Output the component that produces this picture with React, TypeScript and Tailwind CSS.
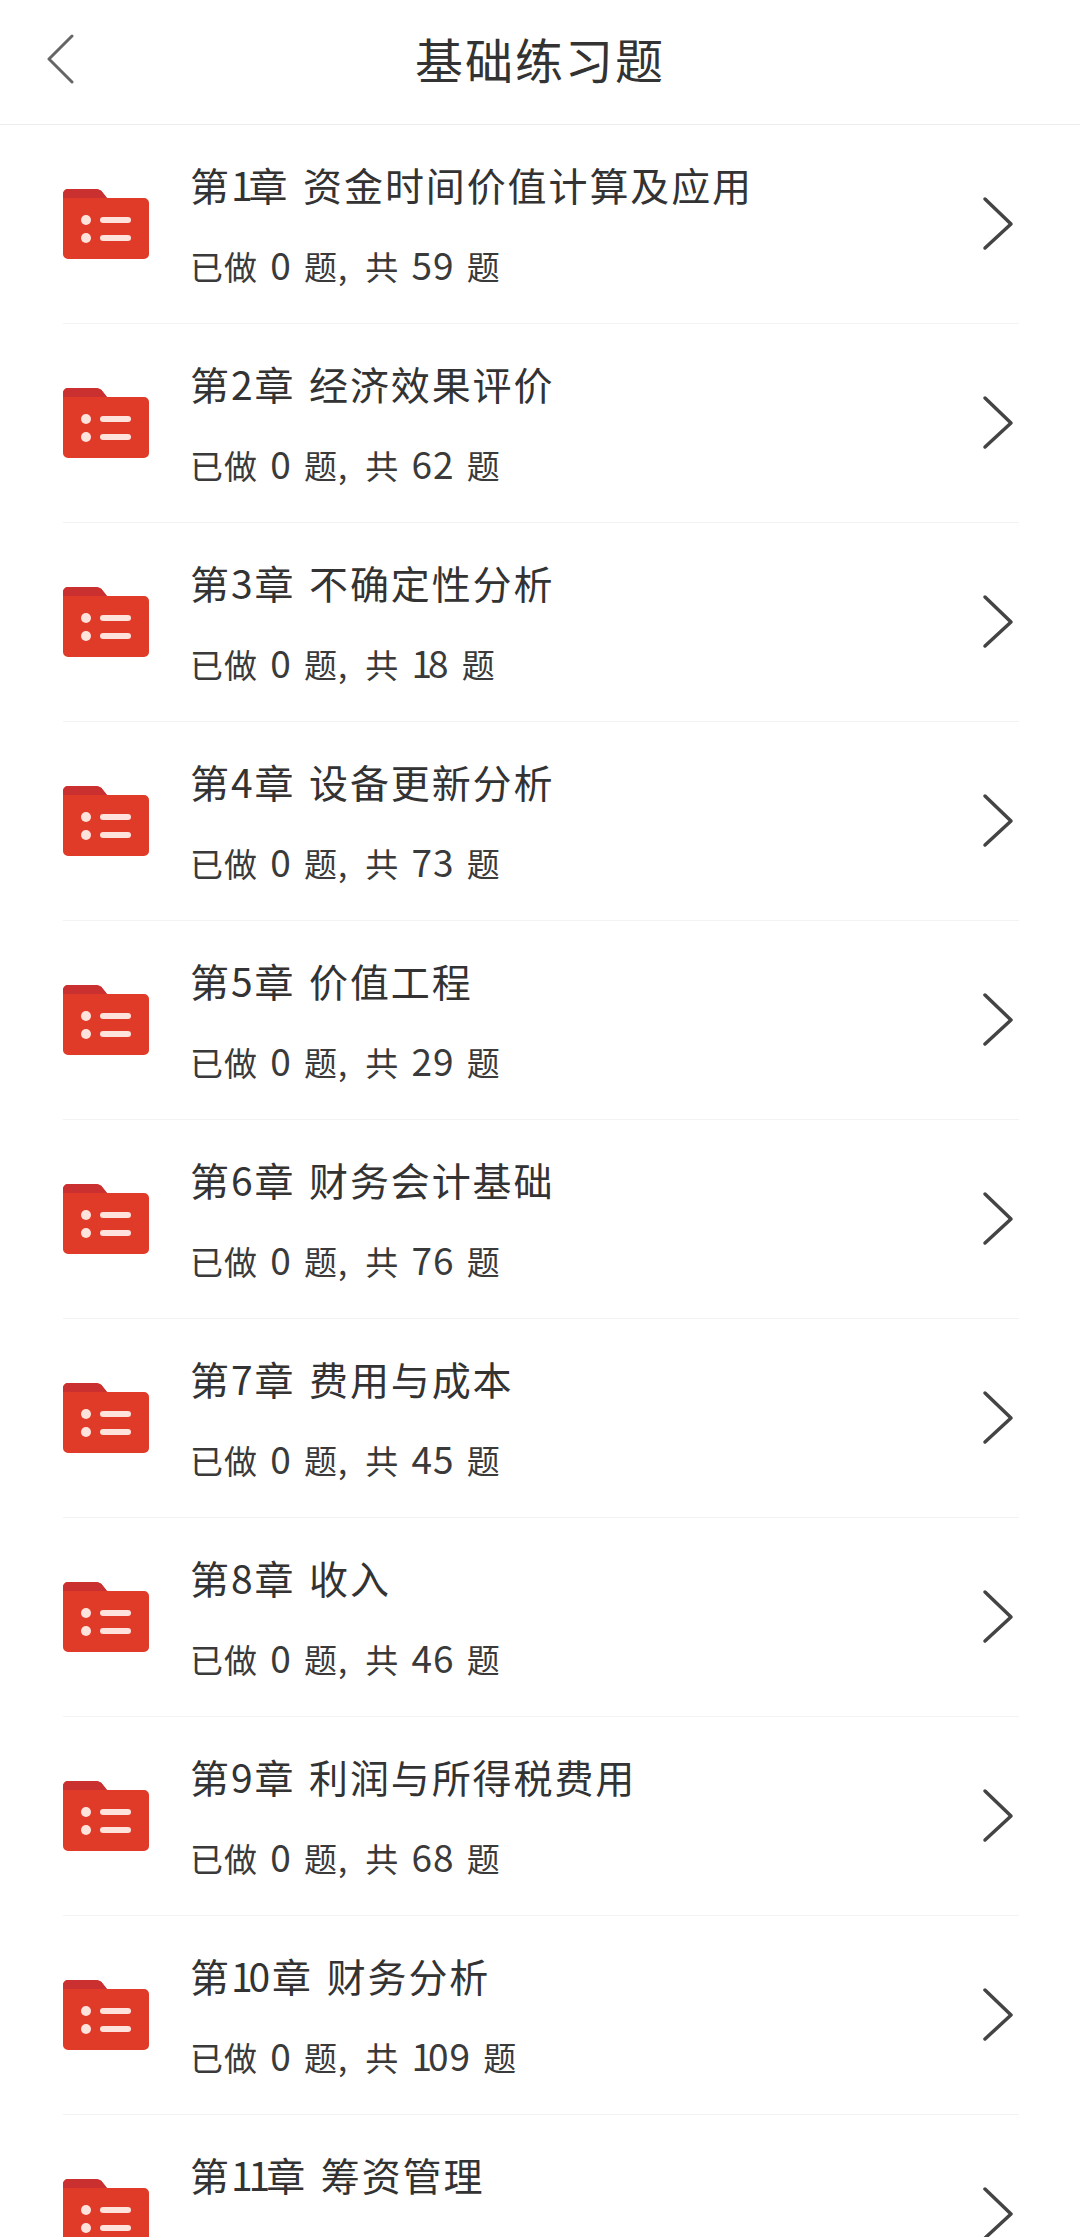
const chapters = [
  { no: "1", name: "资金时间价值计算及应用", total: 59 },
  { no: "2", name: "经济效果评价", total: 62 },
  { no: "3", name: "不确定性分析", total: 18 },
  { no: "4", name: "设备更新分析", total: 73 },
  { no: "5", name: "价值工程", total: 29 },
  { no: "6", name: "财务会计基础", total: 76 },
  { no: "7", name: "费用与成本", total: 45 },
  { no: "8", name: "收入", total: 46 },
  { no: "9", name: "利润与所得税费用", total: 68 },
  { no: "10", name: "财务分析", total: 109 },
  { no: "11", name: "筹资管理" },
]

function FolderIcon() {
  return (
    <svg width="86" height="70" viewBox="0 0 86 70" className="shrink-0">
      <path d="M0 5a5 5 0 0 1 5-5h27c4 0 6 1 8 4l4 5h37a5 5 0 0 1 5 5v51a5 5 0 0 1-5 5H5a5 5 0 0 1-5-5z" fill="#e03a28" />
      <path d="M0 5a5 5 0 0 1 5-5h27c4 0 6 1 8 4l4 5H0z" fill="#c9302f" />
      <circle cx="23" cy="31" r="5" fill="#fde3dc" />
      <circle cx="23" cy="49" r="5" fill="#fde3dc" />
      <rect x="37" y="28" width="31" height="6" rx="3" fill="#fde3dc" />
      <rect x="37" y="46" width="31" height="6" rx="3" fill="#fde3dc" />
    </svg>
  )
}

// the digit 1 is narrower in the original font
function Digits({ value }: { value: string }) {
  return (
    <>
      {value.split("").map((d, i) => (
        <span key={i} className={d === "1" ? "tracking-[-4px]" : ""}>{d}</span>
      ))}
    </>
  )
}

function Chapter({ no, name, total }: { no: string; name: string; total?: number }) {
  return (
    <div className="h-[199px] ml-[63px] mr-[61px] flex items-center border-b border-[#f3f3f3]">
      <FolderIcon />
      <div className="ml-[41px] flex-1 -mt-[5px]">
        <div className="text-[39px] leading-[50px] text-[#333333] tracking-[1.9px] [word-spacing:3px]">
          第<Digits value={no} />章 {name}
        </div>
        <div className="mt-[34px] h-[42px] text-[33px] leading-[42px] text-[#3a3a3a] tracking-[1px] [word-spacing:3.8px]">
          {total !== undefined && (
            <>
              已做 <span className="text-[37px]">0</span> 题, <span className="ml-[5px]">共</span>{" "}
              <span className="text-[37px]"><Digits value={String(total)} /></span> 题
            </>
          )}
        </div>
      </div>
      <svg width="36" height="56" viewBox="0 0 36 56" fill="none" className="shrink-0 mr-[3px]">
        <path d="M5 3l26 25L5 52" stroke="#444444" strokeWidth="3.5" strokeLinecap="round" strokeLinejoin="round" />
      </svg>
    </div>
  )
}

export default function App() {
  return (
    <div
      className="w-[1080px] h-[2237px] overflow-hidden bg-white"
      style={{ fontFamily: '"Noto Sans CJK SC", "Noto Sans", sans-serif' }}
    >
      <header className="relative h-[125px] flex items-center justify-center border-b border-[#ececec]">
        <svg width="30" height="50" viewBox="0 0 30 50" fill="none" className="absolute left-[46px] top-[34px]">
          <path d="M26 2L3 25l23 23" stroke="#666666" strokeWidth="3" strokeLinecap="round" strokeLinejoin="round" />
        </svg>
        <h1 className="text-[48px] leading-[60px] text-[#333333] tracking-[2px] -mt-[8px]">基础练习题</h1>
      </header>
      <div>
        {chapters.map((chapter) => (
          <Chapter key={chapter.no} no={chapter.no} name={chapter.name} total={chapter.total} />
        ))}
      </div>
    </div>
  )
}
